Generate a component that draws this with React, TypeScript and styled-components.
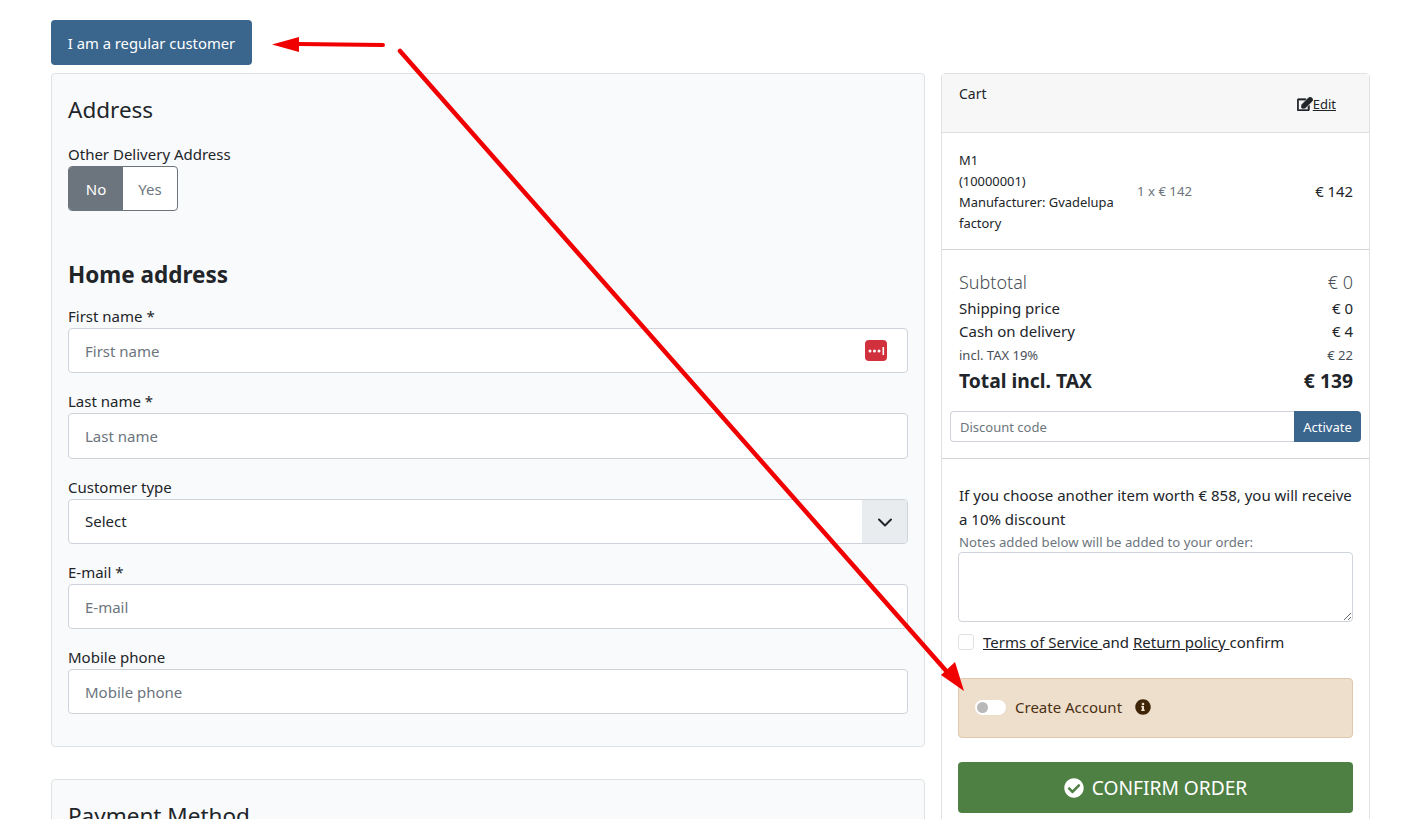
import React from "react";
import styled, { createGlobalStyle } from "styled-components";

const Global = createGlobalStyle`
  html, body { margin: 0; padding: 0; height: 819px; overflow: hidden; background: #fff; }
  * { box-sizing: border-box; }
  body { font-family: "Noto Sans", "Open Sans", sans-serif; font-size: 15px; color: #212529; }
`;

const Page = styled.div`
  position: relative;
  width: 1421px;
  height: 819px;
  overflow: hidden;
  padding: 20px 51px 0;
`;
const RegularButton = styled.button`
  display: block;
  width: 201px;
  height: 45px;
  border: 0;
  border-radius: 4px;
  background: #3a658c;
  color: #fff;
  font: inherit;
  font-size: 14.8px;
  margin-bottom: 8px;
`;
const Columns = styled.div`
  display: grid;
  grid-template-columns: 874px 429px;
  column-gap: 16px;
  align-items: start;
`;
const LeftColumn = styled.div`
  display: flex;
  flex-direction: column;
  gap: 32px;
`;
const Card = styled.section`
  background: #f9fafb;
  border: 1px solid #dfe2e5;
  border-radius: 4px;
  padding: 16px;
`;
const Heading = styled.h2<{ $bold?: boolean }>`
  margin: 4px 0 0;
  font-size: 22.5px;
  line-height: 32px;
  font-weight: ${(p) => (p.$bold ? 700 : 400)};
`;
const SectionLabel = styled.label`
  display: block;
  line-height: 24px;
  height: 24px;
  margin-top: 16px;
`;
const FieldLabel = styled.label`
  display: block;
  line-height: 24px;
  height: 24px;
`;
const Segmented = styled.div`
  display: inline-flex;
  height: 45px;
  width: 110px;
  border: 1px solid #6c757d;
  border-radius: 4px;
  overflow: hidden;
  margin-bottom: 44px;
  background: #fff;
`;
const Segment = styled.div<{ $active?: boolean }>`
  flex: 1;
  display: flex;
  align-items: center;
  justify-content: center;
  background: ${(p) => (p.$active ? "#6c757d" : "transparent")};
  color: ${(p) => (p.$active ? "#fff" : "#6c757d")};
`;
const Field = styled.div<{ $first?: boolean }>`
  margin-top: ${(p) => (p.$first ? 13 : 0)}px;
  margin-bottom: 16px;
`;
const InputWrap = styled.div`
  position: relative;
`;
const TextInput = styled.input<{ $h?: number }>`
  display: block;
  width: 100%;
  height: ${(p) => p.$h ?? 45}px;
  padding: 0 16px;
  border: 1px solid #ced4da;
  border-radius: 4px;
  background: #fff;
  font: inherit;
  color: #212529;
  &::placeholder { color: #6c757d; opacity: 1; }
`;
const PassBadge = styled.svg`
  position: absolute;
  right: 21px;
  top: 12px;
`;
const SelectBox = styled.div`
  display: flex;
  align-items: stretch;
  height: 45px;
  border: 1px solid #ced4da;
  border-radius: 4px;
  background: #fff;
  overflow: hidden;
`;
const SelectValue = styled.div`
  flex: 1;
  display: flex;
  align-items: center;
  padding: 0 0 2px 16px;
`;
const SelectArrow = styled.div`
  width: 45px;
  background: #e9ecef;
  display: flex;
  align-items: center;
  justify-content: center;
`;
const Cart = styled.aside`
  border: 1px solid #dfe2e5;
  border-radius: 4px;
  background: #fff;
`;
const CartHeader = styled.header`
  height: 59px;
  display: flex;
  justify-content: space-between;
  background: #f7f7f7;
  border-bottom: 1px solid #dfdfdf;
  padding: 8px 33px 0 17px;
`;
const CartTitle = styled.div`
  font-size: 14px;
  line-height: 24px;
`;
const EditLink = styled.a`
  display: flex;
  align-items: center;
  height: 24px;
  margin-top: 10px;
  font-size: 13px;
  color: #212529;
  text-decoration: underline;
`;
const EditIcon = styled.svg`
  stroke: #212529;
  stroke-width: 26px;
`;
const ItemRow = styled.div`
  display: grid;
  grid-template-columns: 178px 1fr auto;
  align-items: center;
  height: 117px;
  padding: 0 16px 0 17px;
  border-bottom: 1px solid #d4d4d4;
`;
const ItemInfo = styled.div`
  font-size: 12.9px;
  line-height: 21px;
  padding-top: 2px;
`;
const ItemQty = styled.div`
  font-size: 13.2px;
  color: #6c757d;
`;
const ItemPrice = styled.div`
  font-size: 14.8px;
`;
const Totals = styled.div`
  padding: 16px 16px 0 17px;
`;
const TotalRow = styled.div<{ $size: number; $h: number; $weight?: number; $color?: string }>`
  display: flex;
  justify-content: space-between;
  align-items: center;
  height: ${(p) => p.$h}px;
  font-size: ${(p) => p.$size}px;
  font-weight: ${(p) => p.$weight ?? 400};
  color: ${(p) => p.$color ?? "#212529"};
`;
const DiscountRow = styled.div`
  display: flex;
  height: 31px;
  margin: 17px 8px 16px 8px;
`;
const DiscountInput = styled.input`
  flex: 1;
  min-width: 0;
  border: 1px solid #ced4da;
  border-right: 0;
  border-radius: 4px 0 0 4px;
  padding: 0 9px;
  font: inherit;
  font-size: 13px;
  &::placeholder { color: #6c757d; opacity: 1; }
`;
const ActivateButton = styled.button`
  width: 67px;
  border: 0;
  border-radius: 0 4px 4px 0;
  background: #3a658c;
  color: #fff;
  font: inherit;
  font-size: 13px;
  padding: 0;
`;
const CartBody = styled.div`
  border-top: 1px solid #d4d4d4;
  padding: 24px 16px 24px 16px;
`;
const Promo = styled.p`
  margin: 0;
  font-size: 15px;
  line-height: 24px;
  padding-left: 1px;
`;
const NoteHint = styled.div`
  font-size: 13.2px;
  line-height: 22px;
  height: 21px;
  padding-left: 1px;
  color: #6c757d;
`;
const Notes = styled.textarea`
  display: block;
  width: 100%;
  height: 70px;
  border: 1px solid #ced4da;
  border-radius: 4px;
  background: #fff;
`;
const TermsRow = styled.div`
  display: flex;
  align-items: center;
  height: 20px;
  margin-top: 10px;
  font-size: 15px;
  white-space: pre;
`;
const Check = styled.span`
  width: 16px;
  height: 16px;
  border: 1px solid #dfe2e5;
  border-radius: 3px;
  background: #fff;
  margin-right: 9px;
`;
const TextLink = styled.a`
  color: #212529;
  text-decoration: underline;
`;
const AccountBox = styled.div`
  display: flex;
  align-items: center;
  height: 60px;
  margin-top: 26px;
  padding: 0 0 2px 16px;
  border: 1px solid #e0c8ac;
  border-radius: 4px;
  background: #eedfcd;
  color: #4a3012;
  font-size: 15px;
`;
const Switch = styled.span`
  position: relative;
  width: 31px;
  height: 15px;
  border-radius: 8px;
  background: #fff;
  margin-right: 9px;
  &::after {
    content: "";
    position: absolute;
    left: 2px;
    top: 2px;
    width: 11px;
    height: 11px;
    border-radius: 50%;
    background: #b9b9b9;
  }
`;
const InfoIcon = styled.svg`
  margin-left: 13px;
`;
const ConfirmButton = styled.button`
  display: flex;
  align-items: center;
  justify-content: center;
  gap: 8px;
  width: 100%;
  height: 51px;
  margin-top: 24px;
  border: 0;
  border-radius: 4px;
  background: #4e8044;
  color: #fff;
  font: inherit;
  font-size: 19.2px;
`;
const Arrows = styled.svg`
  position: absolute;
  left: 0;
  top: 0;
  pointer-events: none;
`;

export default function App() {
  return (
    <Page>
      <Global />
      <RegularButton>I am a regular customer</RegularButton>
      <Columns>
        <LeftColumn>
          <Card>
            <Heading>Address</Heading>
            <SectionLabel>Other Delivery Address</SectionLabel>
            <Segmented>
              <Segment $active>No</Segment>
              <Segment>Yes</Segment>
            </Segmented>
            <Heading $bold>Home address</Heading>
            <Field $first>
              <FieldLabel>First name *</FieldLabel>
              <InputWrap>
                <TextInput placeholder="First name" />
                <PassBadge width="22" height="21" viewBox="0 0 22 21">
                  <rect width="22" height="21" rx="4" fill="#d0313c" />
                  <circle cx="5" cy="11" r="1.5" fill="#fff" />
                  <circle cx="9.500" cy="11" r="1.5" fill="#fff" />
                  <circle cx="14" cy="11" r="1.5" fill="#fff" />
                  <rect x="17.500" y="7" width="1.6" height="8" fill="#fff" />
                </PassBadge>
              </InputWrap>
            </Field>
            <Field>
              <FieldLabel>Last name *</FieldLabel>
              <TextInput $h={46} placeholder="Last name" />
            </Field>
            <Field>
              <FieldLabel>Customer type</FieldLabel>
              <SelectBox>
                <SelectValue>Select</SelectValue>
                <SelectArrow>
                  <svg width="16" height="16" viewBox="0 0 16 16" fill="none" stroke="#212529" strokeWidth="2" strokeLinecap="round" strokeLinejoin="round">
                    <path d="M2 5.5l6 6 6-6" />
                  </svg>
                </SelectArrow>
              </SelectBox>
            </Field>
            <Field>
              <FieldLabel>E-mail *</FieldLabel>
              <TextInput placeholder="E-mail" />
            </Field>
            <Field>
              <FieldLabel>Mobile phone</FieldLabel>
              <TextInput placeholder="Mobile phone" />
            </Field>
          </Card>
          <Card>
            <Heading>Payment Method</Heading>
          </Card>
        </LeftColumn>
        <Cart>
          <CartHeader>
            <CartTitle>Cart</CartTitle>
            <EditLink>
              <EditIcon width="16" height="14" viewBox="0 0 576 512" fill="#212529">
                <path d="M402.3 344.9l32-32c5-5 13.7-1.5 13.7 5.7V464c0 26.500-21.500 48-48 48H48c-26.500 0-48-21.500-48-48V112c0-26.500 21.500-48 48-48h273.500c7.100 0 10.700 8.600 5.700 13.700l-32 32c-1.500 1.500-3.500 2.300-5.700 2.300H48v352h352V350.500c0-2.100.8-4.100 2.300-5.600zm156.600-201.800L296.300 405.700l-90.400 10c-26.200 2.900-48.500-19.200-45.600-45.600l10-90.400L432.900 17.100c22.900-22.900 59.900-22.900 82.700 0l43.200 43.200c22.900 22.900 22.900 60 .1 82.800z" />
              </EditIcon>
              Edit
            </EditLink>
          </CartHeader>
          <ItemRow>
            <ItemInfo>
              M1
              <br />
              (10000001)
              <br />
              Manufacturer: Gvadelupa factory
            </ItemInfo>
            <ItemQty>1 x € 142</ItemQty>
            <ItemPrice>€ 142</ItemPrice>
          </ItemRow>
          <Totals>
            <TotalRow $size={18} $h={31} $weight={300} $color="#495057">
              <span>Subtotal</span>
              <span>€ 0</span>
            </TotalRow>
            <TotalRow $size={15} $h={21}>
              <span>Shipping price</span>
              <span>€ 0</span>
            </TotalRow>
            <TotalRow $size={15} $h={26}>
              <span>Cash on delivery</span>
              <span>€ 4</span>
            </TotalRow>
            <TotalRow $size={13} $h={22} $color="#495057">
              <span>incl. TAX 19%</span>
              <span>€ 22</span>
            </TotalRow>
            <TotalRow $size={19.3} $h={28} $weight={700}>
              <span>Total incl. TAX</span>
              <span>€ 139</span>
            </TotalRow>
          </Totals>
          <DiscountRow>
            <DiscountInput placeholder="Discount code" />
            <ActivateButton>Activate</ActivateButton>
          </DiscountRow>
          <CartBody>
            <Promo>If you choose another item worth € 858, you will receive a 10% discount</Promo>
            <NoteHint>Notes added below will be added to your order:</NoteHint>
            <Notes />
            <TermsRow>
              <Check />
              <TextLink>Terms of Service </TextLink>and <TextLink>Return policy </TextLink>confirm
            </TermsRow>
            <AccountBox>
              <Switch />
              Create Account
              <InfoIcon width="16" height="16" viewBox="0 0 512 512" fill="#3f2508">
                <path d="M256 8C119 8 8 119 8 256s111 248 248 248 248-111 248-248S393 8 256 8zm0 110c23.200 0 42 18.800 42 42s-18.800 42-42 42-42-18.800-42-42 18.800-42 42-42zm56 254c0 6.600-5.400 12-12 12h-88c-6.600 0-12-5.400-12-12v-24c0-6.600 5.400-12 12-12h12v-64h-12c-6.600 0-12-5.400-12-12v-24c0-6.600 5.400-12 12-12h64c6.600 0 12 5.400 12 12v100h12c6.600 0 12 5.400 12 12v24z" />
              </InfoIcon>
            </AccountBox>
            <ConfirmButton>
              <svg width="20" height="20" viewBox="0 0 512 512" fill="#fff">
                <path d="M504 256c0 137-111 248-248 248S8 393 8 256 119 8 256 8s248 111 248 248zM227.300 387.300l184-184c6.200-6.200 6.200-16.400 0-22.600l-22.600-22.600c-6.200-6.200-16.400-6.200-22.600 0L216 308.100l-70.100-70.100c-6.200-6.200-16.400-6.200-22.600 0l-22.600 22.600c-6.200 6.200-6.200 16.400 0 22.600l104 104c6.200 6.200 16.400 6.200 22.600 0z" />
              </svg>
              CONFIRM ORDER
            </ConfirmButton>
          </CartBody>
        </Cart>
      </Columns>
      <Arrows width="1421" height="819" viewBox="0 0 1421 819">
        <path d="M383 45L298 44" stroke="#f00000" strokeWidth="4" strokeLinecap="round" fill="none" />
        <path d="M272 44.500L299 37L299 52Z" fill="#f00000" />
        <path d="M400 51L948 673" stroke="#f00000" strokeWidth="4.500" strokeLinecap="round" fill="none" />
        <path d="M964 691L941 675L955 662Z" fill="#f00000" />
      </Arrows>
    </Page>
  );
}
